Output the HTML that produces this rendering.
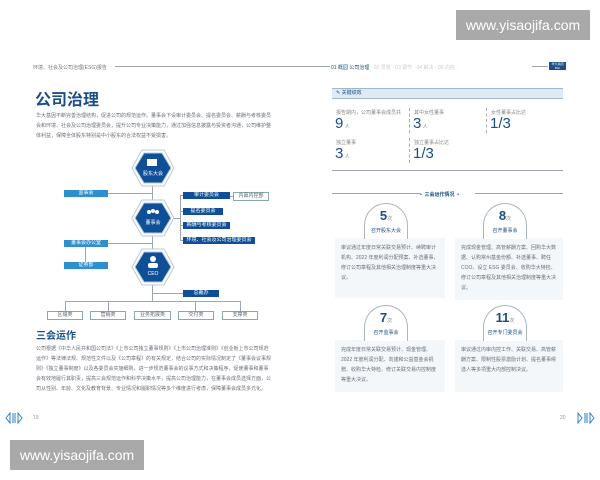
<!DOCTYPE html>
<html><head><meta charset="utf-8"><style>
*{margin:0;padding:0;box-sizing:border-box}
body{width:600px;height:480px;background:#fff;position:relative;overflow:hidden;font-family:"Liberation Sans","Noto Sans CJK SC",sans-serif;color:#555}
.a{position:absolute;white-space:nowrap}
.t5{font-size:5px;color:#777}
.p{font-size:5px;line-height:10px;color:#6a6f78;white-space:normal}
.bx{position:absolute;font-size:5px;color:#fff;text-align:center;line-height:7px}
.lb{background:#2e8fcf}
.db{background:#0f4f97}
.ob{border:0.6px solid #8aa;background:#fff;color:#567}
.ln{position:absolute;background:#9aa8b5}
.card{position:absolute;background:#f4f7fa;padding:5px 6px;font-size:5px;line-height:10px;color:#6a6f78}
.arch{position:absolute;width:44px;height:36px;border:1px solid #aab6c2;border-bottom:none;border-radius:22px 22px 0 0;text-align:center;background:#fff}
.num{font-size:13px;font-weight:bold;color:#1a4f8a;line-height:16px;margin-top:4px}
.num small{font-size:5px;color:#888;font-weight:normal}
.sub{font-size:5px;color:#1a4f8a}
.lab{position:absolute;font-size:5px;color:#888}
.big{position:absolute;font-size:15px;color:#1a4f8a}
.big small{font-size:5px;color:#888}
</style></head><body>
<div class="a t5" style="left:33px;top:64px">环境、社会及公司治理(ESG)报告</div>
<div class="ln" style="left:115px;top:66px;width:215px;height:0.6px"></div>
<div class="a" style="left:331px;top:64px;font-size:5px;color:#1a4f8a">01 概园 公司治理 <span style="color:#ccc">· 02 员景 · 03 调节 · 04 解决 · 05 内控 ·</span></div>
<div class="ln" style="left:532px;top:66px;width:16px;height:0.6px"></div>
<div class="a" style="left:549px;top:62px;width:17px;height:8px;background:#1a4f8a;font-size:3px;color:#fff;line-height:4px;text-align:center">华大基因<br>BGI</div>

<div class="a" style="left:35px;top:86px;font-size:16px;font-weight:bold;color:#1a4f8a">公司治理</div>
<div class="a p" style="left:36px;top:111px;width:235px">华大基因不断完善治理结构，促进公司的规范运作。董事会下设审计委员会、提名委员会、薪酬与考核委员会和环境、社会及公司治理委员会，提升公司专业决策能力，通过加强信息披露与投资者沟通，公司维护整体利益，保障全体股东特别是中小股东的合法权益不受损害。</div>

<div class="ln" style="left:152px;top:168px;width:1px;height:134px"></div>
<div class="ln" style="left:107px;top:193px;width:45px;height:1px"></div>
<div class="ln" style="left:108px;top:243px;width:44px;height:1px"></div>
<div class="ln" style="left:85px;top:247px;width:1px;height:15px"></div>
<div class="ln" style="left:170px;top:218px;width:10px;height:1px"></div>
<div class="ln" style="left:180px;top:195px;width:1px;height:46px"></div>
<div class="ln" style="left:180px;top:195px;width:4px;height:1px"></div>
<div class="ln" style="left:180px;top:211px;width:4px;height:1px"></div>
<div class="ln" style="left:180px;top:225px;width:4px;height:1px"></div>
<div class="ln" style="left:180px;top:240px;width:4px;height:1px"></div>
<div class="ln" style="left:230px;top:196px;width:3px;height:1px"></div>
<div class="ln" style="left:152px;top:293px;width:31px;height:1px"></div>
<div class="ln" style="left:65px;top:301px;width:175px;height:1px"></div>
<div class="ln" style="left:65px;top:301px;width:1px;height:10px"></div>
<div class="ln" style="left:108px;top:301px;width:1px;height:10px"></div>
<div class="ln" style="left:195px;top:301px;width:1px;height:10px"></div>
<div class="ln" style="left:240px;top:301px;width:1px;height:10px"></div>

<svg class="a" style="left:130px;top:148px" width="46" height="140" viewBox="0 0 46 140">
<g fill="#0f4f97" stroke="#b8c8d8" stroke-width="1">
<polygon points="2,20 12,2 34,2 44,20 34,38 12,38" fill="#fff"/>
<polygon points="5,20 14,5 32,5 41,20 32,35 14,35"/>
<polygon points="2,70 12,52 34,52 44,70 34,88 12,88" fill="#fff"/>
<polygon points="5,70 14,55 32,55 41,70 32,85 14,85"/>
<polygon points="2,119 12,101 34,101 44,119 34,137 12,137" fill="#fff"/>
<polygon points="5,119 14,104 32,104 41,119 32,134 14,134"/>
</g>
<g fill="#fff"><rect x="17" y="11" width="10" height="7"/><circle cx="19" cy="64" r="2"/><circle cx="23" cy="63" r="2"/><circle cx="27" cy="64" r="2"/><circle cx="23" cy="111" r="3"/><rect x="18" y="115" width="10" height="5" rx="2"/></g>
<text x="23" y="27" font-size="5" fill="#fff" text-anchor="middle">股东大会</text>
<text x="23" y="76" font-size="5" fill="#fff" text-anchor="middle">董事会</text>
<text x="23" y="127" font-size="5" fill="#fff" text-anchor="middle">CEO</text>
</svg>

<div class="bx lb" style="left:64px;top:190px;width:44px">监事会</div>
<div class="bx lb" style="left:64px;top:240px;width:44px">董事会办公室</div>
<div class="bx lb" style="left:64px;top:262px;width:44px">证券部</div>
<div class="bx db" style="left:183px;top:192px;width:47px">审计委员会</div>
<div class="bx ob" style="left:233px;top:192px;width:36px">内幕内控部</div>
<div class="bx db" style="left:183px;top:208px;width:40px">提名委员会</div>
<div class="bx db" style="left:183px;top:222px;width:47px">薪酬与考核委员会</div>
<div class="bx db" style="left:183px;top:237px;width:72px">环境、社会及公司治理委员会</div>
<div class="bx db" style="left:183px;top:290px;width:36px">总裁办</div>
<div class="bx ob" style="left:47px;top:311px;width:36px">区域类</div>
<div class="bx ob" style="left:90px;top:311px;width:36px">营销类</div>
<div class="bx ob" style="left:134px;top:311px;width:37px">业务拓展类</div>
<div class="bx ob" style="left:178px;top:311px;width:36px">交付类</div>
<div class="bx ob" style="left:222px;top:311px;width:36px">支撑类</div>

<div class="a" style="left:36px;top:327px;font-size:10px;font-weight:bold;color:#1a4f8a">三会运作</div>
<div class="a p" style="left:36px;top:344px;width:235px">公司根据《中华人民共和国公司法》《上市公司独立董事规则》《上市公司治理准则》《创业板上市公司规范运作》等法律法规、规范性文件以及《公司章程》的有关规定，结合公司的实际情况制定了《董事会议事规则》《独立董事制度》以及各委员会实施细则，进一步规范董事会的议事方式和决策程序，促使董事和董事会有效地履行其职责，提高三会规范运作和科学决策水平，提高公司治理能力，在董事会成员选择方面，公司从性别、年龄、文化及教育背景、专业情况和履职情况等多个维度进行考虑，保障董事会成员多元化。</div>

<svg class="a" style="left:5px;top:411px" width="18" height="14"><g fill="none" stroke="#2e7fc0" stroke-width="1"><path d="M1 7 L5 2 L5 12 Z M17 7 L13 2 L13 12 Z M8 2V12 M10 2V12"/></g></svg>
<div class="a" style="left:33px;top:415px;font-size:5px;color:#999">19</div>
<div class="a" style="left:560px;top:415px;font-size:5px;color:#999">20</div>
<svg class="a" style="left:577px;top:411px" width="18" height="14"><g fill="none" stroke="#2e7fc0" stroke-width="1"><path d="M1 2 L5 7 L1 12 Z M17 7 L13 2 L13 12 Z M8 2V12 M10 2V12"/></g></svg>

<div class="a" style="left:332px;top:88px;width:231px;height:11px;background:#dfeaf5;border-top:1px solid #9fb8d0;border-bottom:1px solid #9fb8d0;font-size:5px;color:#1a4f8a;padding-left:4px;line-height:9px">✎ 关键绩效</div>
<div class="lab" style="left:336px;top:109px">报告期内，公司董事会成员共</div>
<div class="big" style="left:335px;top:115px">9<small> 人</small></div>
<div class="lab" style="left:414px;top:109px">其中女性董事</div>
<div class="big" style="left:413px;top:115px">3<small> 人</small></div>
<div class="lab" style="left:491px;top:109px">女性董事占比达</div>
<div class="big" style="left:490px;top:115px">1/3</div>
<div class="lab" style="left:336px;top:139px">独立董事</div>
<div class="big" style="left:335px;top:145px">3<small> 人</small></div>
<div class="lab" style="left:414px;top:139px">独立董事占比达</div>
<div class="big" style="left:413px;top:145px">1/3</div>
<div class="a" style="left:409px;top:108px;height:25px;border-left:0.6px dashed #aab"></div>
<div class="a" style="left:486px;top:108px;height:25px;border-left:0.6px dashed #aab"></div>
<div class="a" style="left:409px;top:138px;height:25px;border-left:0.6px dashed #aab"></div>
<div class="ln" style="left:332px;top:170px;width:231px;height:0.8px"></div>

<div class="ln" style="left:332px;top:193px;width:88px;height:0.8px"></div>
<div class="ln" style="left:475px;top:193px;width:88px;height:0.8px"></div>
<div class="a" style="left:420px;top:191px;font-size:5px;color:#1a4f8a;font-weight:bold">• &nbsp;三会运作情况&nbsp; •</div>

<div class="card" style="left:335px;top:238px;width:110px;height:60px">审议通过年度日常关联交易预计、续聘审计机构、2022 年度利润分配预案、补选董事、修订公司章程及其他相关治理制度等重大决议。</div>
<div class="card" style="left:455px;top:238px;width:108px;height:62px">完成现金管理、高管薪酬方案、回购华大数据、认购常州基金份额、补选董事、聘任 COO、设立 ESG 委员会、收购华大特检、修订公司章程及其他相关治理制度等重大决议。</div>
<div class="arch" style="left:364px;top:203px"><div class="num">5<small>次</small></div><div class="sub">召开股东大会</div></div>
<div class="arch" style="left:483px;top:203px"><div class="num">8<small>次</small></div><div class="sub">召开董事会</div></div>

<div class="card" style="left:335px;top:340px;width:110px;height:52px">完成年度日常关联交易预计、现金管理、2022 年度利润分配、向諾和公益基金会捐赠、收购华大特检、修订关联交易内控制度等重大决议。</div>
<div class="card" style="left:455px;top:340px;width:108px;height:52px">审议通过内审内控工作、关联交易、高管薪酬方案、限制性股票激励计划、提名董事候选人等多项重大内部控制决议。</div>
<div class="arch" style="left:364px;top:305px"><div class="num">7<small>次</small></div><div class="sub">召开监事会</div></div>
<div class="arch" style="left:483px;top:305px"><div class="num">11<small>次</small></div><div class="sub">召开专门委员会</div></div>

<div class="a" style="left:456px;top:10px;width:134px;height:30px;background:#a9a9a9;color:#fff;font-size:14px;line-height:30px;text-align:center">www.yisaojifa.com</div>
<div class="a" style="left:10px;top:440px;width:134px;height:30px;background:#a9a9a9;color:#fff;font-size:14px;line-height:30px;text-align:center">www.yisaojifa.com</div>
</body></html>
